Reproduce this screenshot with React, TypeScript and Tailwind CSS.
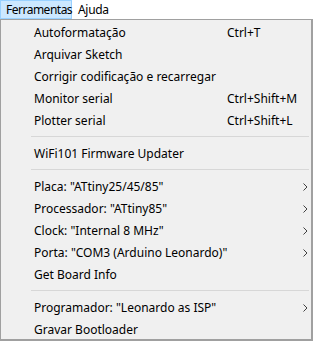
type Item =
  | { kind: 'sep' }
  | { kind: 'item'; label: string; shortcut?: string; sub?: boolean };

const items: Item[] = [
  { kind: 'item', label: 'Autoformatação', shortcut: 'Ctrl+T' },
  { kind: 'item', label: 'Arquivar Sketch' },
  { kind: 'item', label: 'Corrigir codificação e recarregar' },
  { kind: 'item', label: 'Monitor serial', shortcut: 'Ctrl+Shift+M' },
  { kind: 'item', label: 'Plotter serial', shortcut: 'Ctrl+Shift+L' },
  { kind: 'sep' },
  { kind: 'item', label: 'WiFi101 Firmware Updater' },
  { kind: 'sep' },
  { kind: 'item', label: 'Placa: "ATtiny25/45/85"', sub: true },
  { kind: 'item', label: 'Processador: "ATtiny85"', sub: true },
  { kind: 'item', label: 'Clock: "Internal 8 MHz"', sub: true },
  { kind: 'item', label: 'Porta: "COM3 (Arduino Leonardo)"', sub: true },
  { kind: 'item', label: 'Get Board Info' },
  { kind: 'sep' },
  { kind: 'item', label: 'Programador: "Leonardo as ISP"', sub: true },
  { kind: 'item', label: 'Gravar Bootloader' },
];

function Chevron() {
  return (
    <svg width="5" height="8" viewBox="0 0 5 8" className="block">
      <path d="M0.5 0.5 L4 4 L0.5 7.5" fill="none" stroke="#404040" strokeWidth="1" />
    </svg>
  );
}

export default function App() {
  return (
    <div className="w-[313px] h-[341px] bg-white text-black text-[12px] font-['Noto_Sans',sans-serif] overflow-hidden">
      {/* menu bar */}
      <div className="flex h-[19px] bg-white">
        <div className="w-[72px] h-[19px] shrink-0 border border-[#99d1ff] bg-[#cce8ff] pl-[5px] flex items-center leading-none tracking-[-0.5px] whitespace-nowrap">
          Ferramentas
        </div>
        <div className="pl-[6px] flex items-center leading-none tracking-[-0.3px]">Ajuda</div>
      </div>

      {/* dropdown */}
      <div className="w-[313px] h-[322px] bg-[#f0f0f0] border-t border-l border-r-2 border-b-2 border-[#a0a0a0] pt-[2px] overflow-hidden">
        {items.map((it, i) =>
          it.kind === 'sep' ? (
            <div key={i} className="h-[11px] pt-[4px] pl-[30px] pr-[2px]">
              <div className="h-px bg-[#d7d7d7]" />
            </div>
          ) : (
            <div key={i} className="h-[22px] flex items-center pl-[33px] leading-none">
              <span className="w-[193px] shrink-0 whitespace-nowrap">{it.label}</span>
              <span className="flex-1 whitespace-nowrap">{it.shortcut}</span>
              <span className="w-[5px] mr-[3px]">{it.sub && <Chevron />}</span>
            </div>
          )
        )}
      </div>
    </div>
  );
}
